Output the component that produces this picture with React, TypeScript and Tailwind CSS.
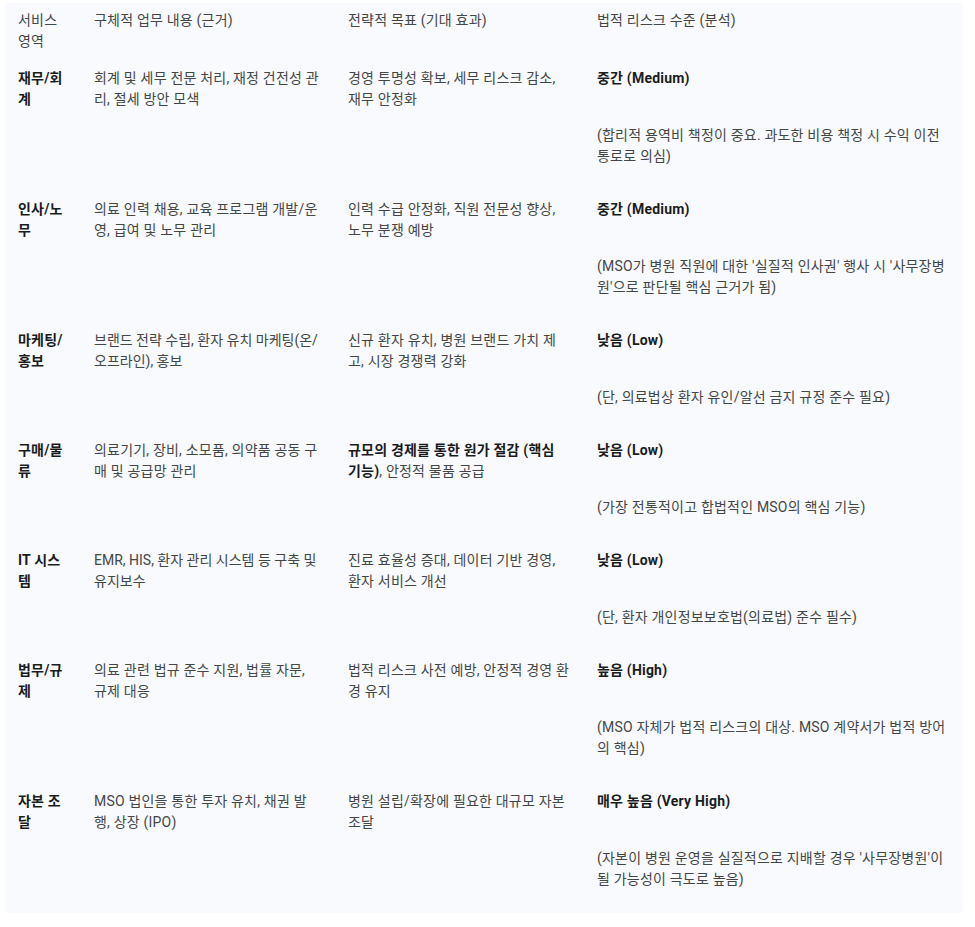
import React from 'react';

type Row = {
  area: string;
  task: string;
  goal: React.ReactNode;
  level: string;
  note: string;
  tight?: boolean;
};

const rows: Row[] = [
  {
    area: '재무/회계',
    task: '회계 및 세무 전문 처리, 재정 건전성 관리, 절세 방안 모색',
    goal: '경영 투명성 확보, 세무 리스크 감소, 재무 안정화',
    level: '중간 (Medium)',
    note: '(합리적 용역비 책정이 중요. 과도한 비용 책정 시 수익 이전 통로로 의심)',
  },
  {
    area: '인사/노무',
    task: '의료 인력 채용, 교육 프로그램 개발/운영, 급여 및 노무 관리',
    goal: '인력 수급 안정화, 직원 전문성 향상, 노무 분쟁 예방',
    level: '중간 (Medium)',
    note: "(MSO가 병원 직원에 대한 '실질적 인사권' 행사 시 '사무장병원'으로 판단될 핵심 근거가 됨)",
  },
  {
    area: '마케팅/홍보',
    task: '브랜드 전략 수립, 환자 유치 마케팅(온/오프라인), 홍보',
    goal: '신규 환자 유치, 병원 브랜드 가치 제고, 시장 경쟁력 강화',
    level: '낮음 (Low)',
    note: '(단, 의료법상 환자 유인/알선 금지 규정 준수 필요)',
    tight: true,
  },
  {
    area: '구매/물류',
    task: '의료기기, 장비, 소모품, 의약품 공동 구매 및 공급망 관리',
    goal: (
      <>
        <b className="font-bold text-[#1b1c1d]">규모의 경제를 통한 원가 절감 (핵심 기능)</b>, 안정적 물품 공급
      </>
    ),
    level: '낮음 (Low)',
    note: '(가장 전통적이고 합법적인 MSO의 핵심 기능)',
  },
  {
    area: 'IT 시스템',
    task: 'EMR, HIS, 환자 관리 시스템 등 구축 및 유지보수',
    goal: '진료 효율성 증대, 데이터 기반 경영, 환자 서비스 개선',
    level: '낮음 (Low)',
    note: '(단, 환자 개인정보보호법(의료법) 준수 필수)',
    tight: true,
  },
  {
    area: '법무/규제',
    task: '의료 관련 법규 준수 지원, 법률 자문, 규제 대응',
    goal: '법적 리스크 사전 예방, 안정적 경영 환경 유지',
    level: '높음 (High)',
    note: '(MSO 자체가 법적 리스크의 대상. MSO 계약서가 법적 방어의 핵심)',
  },
  {
    area: '자본 조달',
    task: 'MSO 법인을 통한 투자 유치, 채권 발행, 상장 (IPO)',
    goal: '병원 설립/확장에 필요한 대규모 자본 조달',
    level: '매우 높음 (Very High)',
    note: "(자본이 병원 운영을 실질적으로 지배할 경우 '사무장병원'이 될 가능성이 극도로 높음)",
  },
];

const cols = 'grid grid-cols-[76px_254px_249px_366px]';

export default function App() {
  return (
    <div className="min-h-screen bg-white pt-[3px] pl-[5px]" style={{ fontFamily: 'Roboto, "Noto Sans CJK KR", sans-serif' }}>
      <div className="w-[958px] rounded-[4px] bg-[#f8fafd] pl-[13px] pt-[7px] pb-[7px] text-[14px] leading-[21px] tracking-[0.2px] text-[#444746]">
        {/* 헤더 */}
        <div className={cols}>
          <div className="pr-6">서비스 영역</div>
          <div className="pr-6">구체적 업무 내용 (근거)</div>
          <div className="pr-6">전략적 목표 (기대 효과)</div>
          <div className="pr-6">법적 리스크 수준 (분석)</div>
        </div>

        {rows.map((r, i) => (
          <div key={i} className={`${cols} pt-4 pb-4`}>
            <div className="pr-6 font-bold text-[#1b1c1d]">{r.area}</div>
            <div className={r.tight ? 'pr-[28px] tracking-normal' : 'pr-[28px]'}>{r.task}</div>
            <div className="pr-[27px]">{r.goal}</div>
            <div className="pr-[10px]">
              <p className="font-bold text-[#1b1c1d]">{r.level}</p>
              <p className="mt-[36px]">{r.note}</p>
            </div>
          </div>
        ))}
      </div>
    </div>
  );
}
